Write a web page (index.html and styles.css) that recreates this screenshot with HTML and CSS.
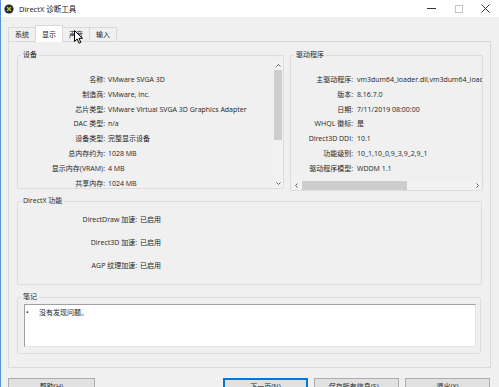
FILE: index.html
```html
<!DOCTYPE html>
<html lang="zh-CN">
<head>
    <meta charset="UTF-8">
    <title>DirectX 诊断工具</title>
    <link rel="stylesheet" href="styles.css">
</head>
<body>
<div class="window">
    <div class="titlebar">
        <svg class="app-icon" viewBox="0 0 10 10">
            <circle cx="5" cy="5" r="4.6" fill="#1f2733"/>
            <path d="M3 3l4 4" stroke="#f2b51c" stroke-width="1.4"/>
            <path d="M7 3l-4 4" stroke="#9ccb2a" stroke-width="1.4"/>
        </svg>
        <span class="title">DirectX 诊断工具</span>
        <div class="controls">
            <span class="ctl"><svg width="9" height="9"><path d="M0 4.5h9" stroke="#333"/></svg></span>
            <span class="ctl"><svg width="8" height="8"><rect x="0.5" y="0.5" width="7" height="7" fill="none" stroke="#c4c4c4"/></svg></span>
            <span class="ctl"><svg width="9" height="9"><path d="M0.5 0.5l8 8M8.5 0.5l-8 8" stroke="#333"/></svg></span>
        </div>
    </div>

    <div class="tabs">
        <span class="tab">系统</span>
        <span class="tab active">显示</span>
        <span class="tab">声音</span>
        <span class="tab">输入</span>
    </div>

    <div class="panel">
        <div class="top-row">
            <fieldset class="group device">
                <legend>设备</legend>
                <div class="device-body">
                    <div class="info">
                        <span class="k">名称:</span><span class="v">VMware SVGA 3D</span>
                        <span class="k">制造商:</span><span class="v">VMware, Inc.</span>
                        <span class="k">芯片类型:</span><span class="v">VMware Virtual SVGA 3D Graphics Adapter</span>
                        <span class="k">DAC 类型:</span><span class="v">n/a</span>
                        <span class="k">设备类型:</span><span class="v">完整显示设备</span>
                        <span class="k">总内存约为:</span><span class="v">1028 MB</span>
                        <span class="k">显示内存(VRAM):</span><span class="v">4 MB</span>
                        <span class="k">共享内存:</span><span class="v">1024 MB</span>
                    </div>
                    <div class="vscroll">
                        <span class="arrow"><svg width="5" height="3"><path d="M0.5 2.5l2-2 2 2" fill="none" stroke="#606060"/></svg></span>
                        <span class="vthumb"></span>
                        <span class="spacer"></span>
                        <span class="arrow"><svg width="5" height="3"><path d="M0.5 0.5l2 2 2-2" fill="none" stroke="#606060"/></svg></span>
                    </div>
                </div>
            </fieldset>

            <fieldset class="group driver">
                <legend>驱动程序</legend>
                <div class="driver-body">
                    <div class="info">
                        <span class="k">主驱动程序:</span><span class="v">vm3dum64_loader.dll,vm3dum64_loader.dll</span>
                        <span class="k">版本:</span><span class="v">8.16.7.0</span>
                        <span class="k">日期:</span><span class="v">7/11/2019 08:00:00</span>
                        <span class="k">WHQL 徽标:</span><span class="v">是</span>
                        <span class="k">Direct3D DDI:</span><span class="v">10.1</span>
                        <span class="k">功能级别:</span><span class="v">10_1,10_0,9_3,9_2,9_1</span>
                        <span class="k">驱动程序模型:</span><span class="v">WDDM 1.1</span>
                    </div>
                    <div class="hscroll">
                        <span class="harrow"><svg width="3" height="5"><path d="M2.5 0.5l-2 2 2 2" fill="none" stroke="#606060"/></svg></span>
                        <span class="hthumb"></span>
                        <span class="spacer"></span>
                        <span class="harrow"><svg width="3" height="5"><path d="M0.5 0.5l2 2-2 2" fill="none" stroke="#606060"/></svg></span>
                    </div>
                </div>
            </fieldset>
        </div>

        <fieldset class="group features">
            <legend>DirectX 功能</legend>
            <div class="features-body">
                <span class="k">DirectDraw 加速:</span><span class="v">已启用</span>
                <span class="k">Direct3D 加速:</span><span class="v">已启用</span>
                <span class="k">AGP 纹理加速:</span><span class="v">已启用</span>
            </div>
        </fieldset>

        <fieldset class="group notes">
            <legend>笔记</legend>
            <div class="notes-body">
                <div class="notebox">
                    <span class="bullet">•</span><span>没有发现问题。</span>
                </div>
            </div>
        </fieldset>
    </div>

    <div class="buttons">
        <span class="btn help">帮助(H)</span>
        <span class="btn default">下一页(N)</span>
        <span class="btn">保存所有信息(S)...</span>
        <span class="btn">退出(X)</span>
    </div>

    <svg class="cursor" width="9" height="14" viewBox="0 0 9 14">
        <path d="M0.5 0.5V11.5L3.2 9L5 13.2L6.8 12.4L5 8.3H8.5Z" fill="#fff" stroke="#000" stroke-linejoin="round"/>
    </svg>
</div>
</body>
</html>
```

FILE: styles.css
```css
body {
    margin: 0;
    width: 499px;
    height: 387px;
    overflow: hidden;
    background-color: #f0f0f0;
    font-family: "Open Sans", "Noto Sans CJK SC", sans-serif;
    font-size: 7px;
    color: #1e1e1e;
}
.window {
    position: relative;
    height: 387px;
    box-sizing: border-box;
    border-left: 1px solid #5593d6;
}
.titlebar {
    display: flex;
    align-items: center;
    height: 17px;
    background-color: #fff;
}
.app-icon {
    width: 10px;
    height: 10px;
    margin-left: 3px;
}
.title {
    margin-left: 5px;
    font-size: 7.5px;
    color: #111;
}
.controls {
    margin-left: auto;
    display: flex;
    height: 17px;
}
.ctl {
    width: 27px;
    display: flex;
    align-items: center;
    justify-content: center;
}
.tabs {
    display: flex;
    align-items: flex-end;
    height: 16px;
    margin-top: 8px;
    padding-left: 7px;
}
.tab {
    height: 14px;
    box-sizing: border-box;
    padding: 0 6px;
    line-height: 13px;
    border: 1px solid #d9d9d9;
    border-bottom: none;
    margin-right: -1px;
    background-color: #f0f0f0;
}
.tab.active {
    position: relative;
    z-index: 1;
    height: 17px;
    margin-bottom: -1px;
    padding-top: 2px;
    background-color: #fff;
}
.panel {
    margin: 0 8px 0 7px;
    height: 327px;
    box-sizing: border-box;
    border: 1px solid #d9d9d9;
    padding: 8px 7px 0 8px;
}
.top-row {
    display: flex;
    align-items: flex-start;
    gap: 6px;
}
.group {
    margin: 0;
    padding: 0;
    min-width: 0;
    box-sizing: border-box;
    border: 1px solid #dcdcdc;
    border-radius: 2px;
}
.group legend {
    padding: 0 2px;
    margin-left: 3px;
    line-height: 10px;
}
.k {
    text-align: right;
}
.device {
    width: 267px;
}
.device-body {
    display: flex;
    height: 128px;
}
.info {
    flex: 1;
    display: grid;
    grid-template-columns: 87px 1fr;
    column-gap: 3px;
    grid-auto-rows: 14.8px;
    align-content: start;
    line-height: 14.8px;
    padding-top: 13px;
    overflow: hidden;
    white-space: nowrap;
}
.vscroll {
    width: 10px;
    display: flex;
    flex-direction: column;
    align-items: center;
    background-color: #f2f2f2;
}
.arrow {
    height: 10px;
    display: flex;
    align-items: center;
    justify-content: center;
}
.vthumb {
    width: 8px;
    height: 70px;
    background-color: #cdcdcd;
}
.spacer {
    flex: 1;
}
.driver {
    width: 193px;
}
.driver-body {
    display: flex;
    flex-direction: column;
    height: 130px;
}
.driver .info {
    flex: none;
    height: 121px;
    box-sizing: border-box;
    grid-template-columns: 62px 1fr;
    column-gap: 4px;
}
.hscroll {
    display: flex;
    align-items: center;
    height: 9px;
    background-color: #f2f2f2;
}
.harrow {
    width: 10px;
    display: flex;
    justify-content: center;
}
.hthumb {
    width: 105px;
    height: 9px;
    margin-left: 1px;
    background-color: #cdcdcd;
}
.features {
    width: 465px;
    margin-top: 5px;
}
.features-body {
    display: grid;
    grid-template-columns: 119px auto;
    column-gap: 3px;
    grid-auto-rows: 23px;
    line-height: 23px;
    justify-content: start;
    padding: 2px 0 7px;
}
.notes {
    width: 464px;
    margin-top: 7px;
}
.notes-body {
    padding: 2px 4px 6px 6px;
}
.notebox {
    display: flex;
    height: 43px;
    box-sizing: border-box;
    padding: 3px 0 0 1px;
    line-height: 10px;
    background-color: #fff;
    border: 1px solid;
    border-color: #a0a0a0 #e3e3e3 #e3e3e3 #a0a0a0;
}
.bullet {
    width: 13px;
}
.buttons {
    display: flex;
    gap: 6px;
    margin-top: 10px;
    padding: 0 9px 0 7px;
}
.btn {
    width: 85px;
    height: 22px;
    box-sizing: border-box;
    padding-top: 3px;
    line-height: 10px;
    text-align: center;
    background-color: #e1e1e1;
    border: 1px solid #adadad;
}
.btn.help {
    width: 87px;
    margin-right: auto;
}
.btn.default {
    border-color: #0078d7;
    box-shadow: inset 0 0 0 1px #0078d7;
}
.cursor {
    position: absolute;
    left: 73px;
    top: 30px;
}
```
